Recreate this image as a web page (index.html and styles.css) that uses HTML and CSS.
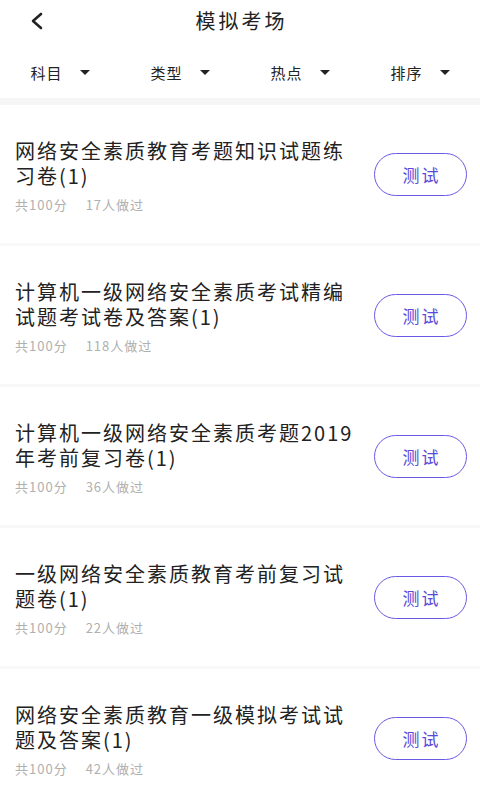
FILE: index.html
```html
<!DOCTYPE html>
<html lang="zh-CN">
<head>
    <meta charset="UTF-8">
    <meta name="viewport" content="width=device-width, initial-scale=1.0">
    <title>模拟考场</title>
    <link rel="stylesheet" href="styles.css">
</head>
<body>
    <header class="top-bar">
        <div class="back-btn">
            <svg width="14" height="18" viewBox="0 0 14 18">
                <polyline points="11,2 3,9 11,16" fill="none" stroke="#222" stroke-width="2.6" stroke-linecap="round" stroke-linejoin="round"/>
            </svg>
        </div>
        <h1 class="page-title">模拟考场</h1>
        <div></div>
    </header>

    <div class="filter-bar">
        <div class="filter-item"><span>科目</span><i class="caret"></i></div>
        <div class="filter-item"><span>类型</span><i class="caret"></i></div>
        <div class="filter-item"><span>热点</span><i class="caret"></i></div>
        <div class="filter-item"><span>排序</span><i class="caret"></i></div>
    </div>

    <ul class="exam-list">
        <li class="exam-item">
            <div class="exam-info">
                <div class="exam-title">网络安全素质教育考题知识试题练习卷(1)</div>
                <div class="exam-meta"><span>共100分</span><span>17人做过</span></div>
            </div>
            <button class="test-btn">测试</button>
        </li>
        <li class="exam-item">
            <div class="exam-info">
                <div class="exam-title">计算机一级网络安全素质考试精编试题考试卷及答案(1)</div>
                <div class="exam-meta"><span>共100分</span><span>118人做过</span></div>
            </div>
            <button class="test-btn">测试</button>
        </li>
        <li class="exam-item">
            <div class="exam-info">
                <div class="exam-title">计算机一级网络安全素质考题2019年考前复习卷(1)</div>
                <div class="exam-meta"><span>共100分</span><span>36人做过</span></div>
            </div>
            <button class="test-btn">测试</button>
        </li>
        <li class="exam-item">
            <div class="exam-info">
                <div class="exam-title">一级网络安全素质教育考前复习试题卷(1)</div>
                <div class="exam-meta"><span>共100分</span><span>22人做过</span></div>
            </div>
            <button class="test-btn">测试</button>
        </li>
        <li class="exam-item">
            <div class="exam-info">
                <div class="exam-title">网络安全素质教育一级模拟考试试题及答案(1)</div>
                <div class="exam-meta"><span>共100分</span><span>42人做过</span></div>
            </div>
            <button class="test-btn">测试</button>
        </li>
    </ul>
</body>
</html>
```

FILE: styles.css
```css
body {
    font-family: "Noto Sans CJK SC", "Noto Sans", sans-serif;
    background-color: #fff;
    color: #222;
    margin: 0;
    padding: 0;
}

.top-bar {
    display: grid;
    grid-template-columns: 1fr auto 1fr;
    align-items: center;
    height: 42px;
}

.back-btn {
    display: flex;
    align-items: center;
    padding-left: 30px;
}

.page-title {
    margin: 0;
    font-size: 20px;
    font-weight: normal;
    letter-spacing: 3px;
    padding-left: 3px;
    line-height: 42px;
}

.filter-bar {
    display: grid;
    grid-template-columns: repeat(4, 1fr);
    padding: 20px 0 16px;
    border-bottom: 7px solid #f6f6f6;
}

.filter-item {
    display: flex;
    align-items: center;
    justify-content: center;
    gap: 17px;
    height: 20px;
    font-size: 15px;
    letter-spacing: 1px;
}

.caret {
    width: 0;
    height: 0;
    border-left: 5px solid transparent;
    border-right: 5px solid transparent;
    border-top: 5px solid #222;
}

.exam-list {
    list-style: none;
    margin: 0;
    padding: 0;
}

.exam-item {
    display: flex;
    align-items: center;
    gap: 14px;
    padding: 33px 13px 29px 15px;
    border-bottom: 3px solid #f8f8f8;
}

.exam-info {
    flex: 1;
    min-width: 0;
}

.exam-title {
    font-size: 20px;
    letter-spacing: 2px;
    line-height: 25px;
    height: 50px;
    color: #222;
}

.exam-meta {
    display: flex;
    gap: 18px;
    margin-top: 8px;
    font-size: 13px;
    letter-spacing: 1px;
    line-height: 18px;
    color: #b0b0b0;
}

.test-btn {
    flex-shrink: 0;
    width: 93px;
    height: 43px;
    margin-bottom: 4px;
    border: 1.5px solid #6a5ae3;
    border-radius: 22px;
    background-color: #fff;
    color: #5a4ad8;
    font-family: inherit;
    font-size: 17px;
    letter-spacing: 2px;
    padding: 0 0 0 2px;
    cursor: pointer;
}
```
